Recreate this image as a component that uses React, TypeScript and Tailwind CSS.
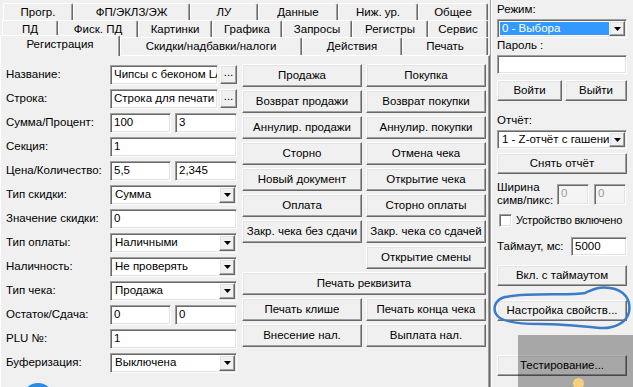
import React from "react";
import clsx from "clsx";

const raised =
  "bg-[#f0f0f0] border border-t-white border-l-white border-r-[#696969] border-b-[#696969] shadow-[inset_-1px_-1px_0_#a0a0a0,inset_1px_1px_0_#e3e3e3]";
const sunken =
  "border border-t-[#a0a0a0] border-l-[#a0a0a0] border-r-white border-b-white shadow-[inset_1px_1px_0_#696969,inset_-1px_-1px_0_#e3e3e3]";

function Btn({ children, className }: { children?: React.ReactNode; className?: string }) {
  return (
    <div className={clsx("flex items-center justify-center whitespace-nowrap", raised, className)}>
      {children}
    </div>
  );
}

function Edit({ value, className, disabled }: { value?: string; className?: string; disabled?: boolean }) {
  return (
    <div
      className={clsx(
        "flex items-center pl-[3px] overflow-hidden whitespace-nowrap",
        sunken,
        disabled ? "bg-[#f4f4f4] text-[#9a9a9a]" : "bg-white",
        className
      )}
    >
      {value}
    </div>
  );
}

function Arrow() {
  return (
    <svg width="7" height="4" viewBox="0 0 7 4">
      <polygon points="0,0 7,0 3.5,4" fill="#000" />
    </svg>
  );
}

function Combo({ value, className, selected }: { value: string; className?: string; selected?: boolean }) {
  return (
    <div className={clsx("flex bg-white p-[1px]", sunken, className)}>
      <div className="flex-1 min-w-0 flex items-center overflow-hidden whitespace-nowrap pl-[1px] py-[1px]">
        <span className={clsx("h-full flex items-center pl-[2px]", selected ? "bg-[#3399ff] text-white w-full" : "")}>
          {value}
        </span>
      </div>
      <Btn className="w-[16px] h-full shrink-0">
        <Arrow />
      </Btn>
    </div>
  );
}

function Tab({ w, children, selected }: { w: number; children: React.ReactNode; selected?: boolean }) {
  return (
    <div
      style={{ width: w }}
      className={clsx(
        "flex items-center justify-center whitespace-nowrap rounded-t-[2px] border-t border-l border-r border-t-white border-l-white border-r-[#696969] shadow-[inset_-1px_0_0_#a0a0a0] bg-[#f0f0f0]",
        selected ? "relative z-10 h-[21px] -mt-[2px] -mb-[1px] pb-[2px]" : "h-full pt-[1px]"
      )}
    >
      {children}
    </div>
  );
}

function Row({ label, children }: { label: string; children: React.ReactNode }) {
  return (
    <div className="flex items-center h-[20px]">
      <div className="w-[104px] whitespace-nowrap">{label}</div>
      <div className="w-[127px] h-full flex">{children}</div>
    </div>
  );
}

const row1: [number, string][] = [
  [70, "Прогр."],
  [117, "ФП/ЭКЛЗ/ЭЖ"],
  [68, "ЛУ"],
  [80, "Данные"],
  [80, "Ниж. ур."],
  [70, "Общее"],
];
const row2: [number, string][] = [
  [56, "ПД"],
  [80, "Фиск. ПД"],
  [74, "Картинки"],
  [70, "Графика"],
  [70, "Запросы"],
  [76, "Регистры"],
  [60, "Сервис"],
];

export default function App() {
  return (
    <div className="relative w-[633px] h-[387px] overflow-hidden bg-[#f0f0f0] text-black text-[11.5px] leading-none font-['Liberation_Sans',Arial,sans-serif] flex">
      {/* tab control */}
      <div className="w-[490px] shrink-0 flex flex-col">
        <div className="h-[3px]" />
        <div className="flex h-[17px] pl-[3px]">
          {row1.map(([w, t]) => (
            <Tab key={t} w={w}>{t}</Tab>
          ))}
        </div>
        <div className="flex h-[17px] pl-[2px]">
          {row2.map(([w, t]) => (
            <Tab key={t} w={w}>{t}</Tab>
          ))}
        </div>
        <div className="flex h-[18px]">
          <Tab w={120} selected>Регистрация</Tab>
          <Tab w={182}>Скидки/надбавки/налоги</Tab>
          <Tab w={100}>Действия</Tab>
          <Tab w={86}>Печать</Tab>
        </div>
        <div className="flex-1 border-t border-l border-r border-t-white border-l-white border-r-[#696969] shadow-[inset_-1px_0_0_#a0a0a0] flex pt-[8px] pl-[5px]">
          <div className="w-[231px] mt-[1px] flex flex-col gap-[4px]">
            <Row label="Название:">
              <Edit value="Чипсы с беконом LAYS" className="w-[108px] h-full" />
              <Btn className="w-[17px] h-[19px] ml-[2px] pb-[4px]">...</Btn>
            </Row>
            <Row label="Строка:">
              <Edit value="Строка для печати" className="w-[108px] h-full" />
              <Btn className="w-[17px] h-[19px] ml-[2px] pb-[4px]">...</Btn>
            </Row>
            <Row label="Сумма/Процент:">
              <Edit value="100" className="w-[61px] h-full" />
              <Edit value="3" className="flex-1 ml-[4px] h-full" />
            </Row>
            <Row label="Секция:">
              <Edit value="1" className="w-full h-full" />
            </Row>
            <Row label="Цена/Количество:">
              <Edit value="5,5" className="w-[61px] h-full" />
              <Edit value="2,345" className="flex-1 ml-[4px] h-full" />
            </Row>
            <Row label="Тип скидки:">
              <Combo value="Сумма" className="w-full h-full" />
            </Row>
            <Row label="Значение скидки:">
              <Edit value="0" className="w-full h-full" />
            </Row>
            <Row label="Тип оплаты:">
              <Combo value="Наличными" className="w-full h-full" />
            </Row>
            <Row label="Наличность:">
              <Combo value="Не проверять" className="w-full h-full" />
            </Row>
            <Row label="Тип чека:">
              <Combo value="Продажа" className="w-full h-full" />
            </Row>
            <Row label="Остаток/Сдача:">
              <Edit value="0" className="w-[61px] h-full" />
              <Edit value="0" className="flex-1 ml-[4px] h-full" />
            </Row>
            <Row label="PLU №:">
              <Edit value="1" className="w-full h-full" />
            </Row>
            <Row label="Буферизация:">
              <Combo value="Выключена" className="w-full h-full" />
            </Row>
          </div>
          <div className="ml-[5px] w-[244px] grid grid-cols-2 gap-x-[4px] gap-y-[3px] auto-rows-[23px] content-start">
            <Btn>Продажа</Btn>
            <Btn>Покупка</Btn>
            <Btn>Возврат продажи</Btn>
            <Btn>Возврат покупки</Btn>
            <Btn>Аннулир. продажи</Btn>
            <Btn>Аннулир. покупки</Btn>
            <Btn>Сторно</Btn>
            <Btn>Отмена чека</Btn>
            <Btn>Новый документ</Btn>
            <Btn>Открытие чека</Btn>
            <Btn>Оплата</Btn>
            <Btn>Сторно оплаты</Btn>
            <Btn>Закр. чека без сдачи</Btn>
            <Btn>Закр. чека со сдачей</Btn>
            <Btn className="col-start-2">Открытие смены</Btn>
            <Btn className="col-span-2">Печать реквизита</Btn>
            <Btn>Печать клише</Btn>
            <Btn>Печать конца чека</Btn>
            <Btn>Внесение нал.</Btn>
            <Btn>Выплата нал.</Btn>
          </div>
        </div>
      </div>

      {/* right panel */}
      <div className="flex-1 min-w-0 border-l border-l-[#a0a0a0] shadow-[inset_1px_0_0_#fff] pl-[6px] pr-[6px] flex flex-col">
        <div className="h-[14px] mt-[3px] flex items-center">Режим:</div>
        <Combo value="0 - Выбора" selected className="h-[19px] mt-[2px]" />
        <div className="h-[14px] mt-[1px] flex items-center">Пароль :</div>
        <Edit className="h-[19px] mt-[2px]" />
        <div className="flex gap-[3px] h-[21px] mt-[6px]">
          <Btn className="w-[65px]">Войти</Btn>
          <Btn className="flex-1">Выйти</Btn>
        </div>
        <div className="h-[14px] mt-[13px] flex items-center">Отчёт:</div>
        <Combo value="1 - Z-отчёт с гашением" className="h-[19px] mt-[2px]" />
        <Btn className="h-[21px] mt-[4px]">Снять отчёт</Btn>
        <div className="flex items-center h-[24px] mt-[8px]">
          <div className="w-[60px] leading-[13px]">
            Ширина
            <br />
            симв/пикс:
          </div>
          <Edit value="0" disabled className="w-[32px] h-[21px]" />
          <Edit value="0" disabled className="w-[32px] h-[21px] ml-[5px]" />
        </div>
        <div className="flex items-center h-[16px] mt-[6px]">
          <div className={clsx("w-[13px] h-[13px] shrink-0 bg-white ml-[2px]", sunken)} />
          <span className="ml-[4px] whitespace-nowrap text-[11px] tracking-[-0.2px]">Устройство включено</span>
        </div>
        <div className="flex items-center h-[19px] mt-[9px]">
          <div className="w-[74px] whitespace-nowrap">Таймаут, мс:</div>
          <Edit value="5000" className="flex-1 h-full" />
        </div>
        <Btn className="h-[21px] mt-[9px]">Вкл. с таймаутом</Btn>
        <Btn className="h-[21px] mt-[14px]">Настройка свойств...</Btn>
        <Btn className="h-[21px] mt-[34px]">Тестирование...</Btn>
      </div>

      {/* overlays: annotation, dimmed corner, cursor highlight */}
      <div className="absolute left-[518px] top-[335px] w-[115px] h-[52px] bg-black/30" />
      <div className="absolute left-[573px] top-[378px] w-[11px] h-[11px] rounded-full bg-[#f8cf7e]" />
      <div className="absolute left-[22px] top-[383px] w-[32px] h-[32px] rounded-full bg-[#2d8ae0]" />
      <svg className="absolute left-0 top-0 pointer-events-none" width="633" height="387" viewBox="0 0 633 387">
        <path
          d="M505 297 C530 292 570 296 585 293 C592 290 598 286 610 288 C625 290 631 300 629 312 C627 322 615 329 600 328 C580 326 560 324 540 324 C520 324 500 322 496 314 C492 306 497 299 505 297 Z"
          fill="none"
          stroke="#3a7cc8"
          strokeWidth="2.5"
        />
      </svg>
    </div>
  );
}
